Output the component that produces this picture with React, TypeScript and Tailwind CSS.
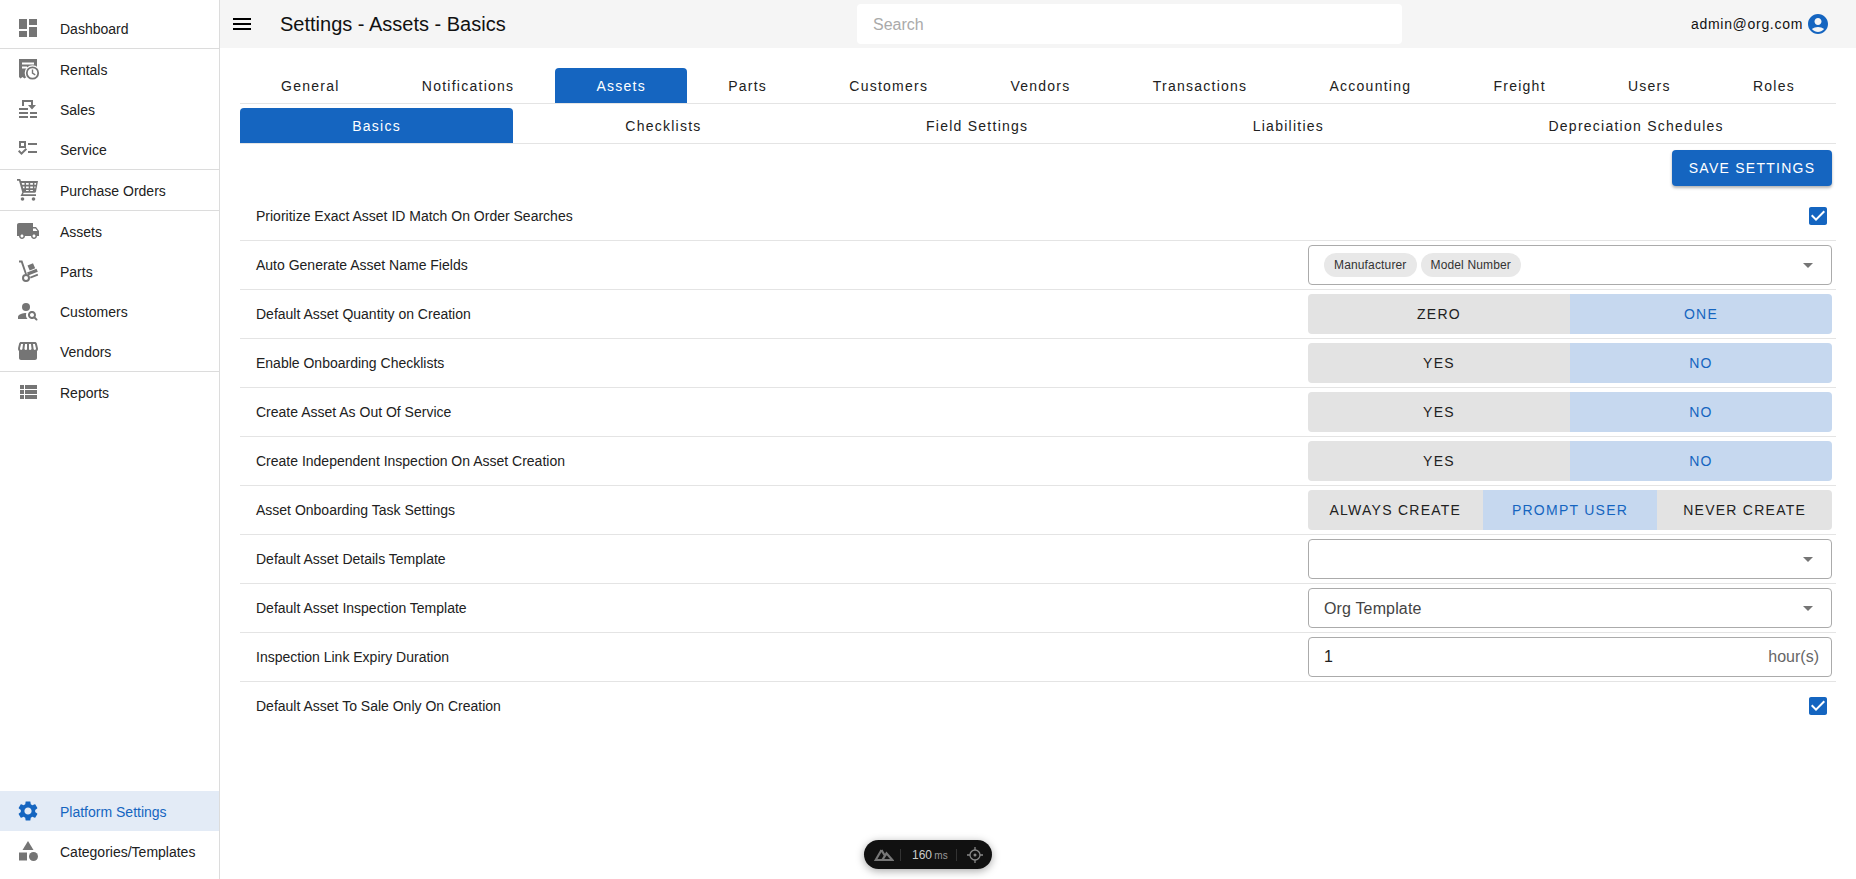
import type { ReactNode } from "react";

const FONT = "font-['Liberation_Sans',Arial,sans-serif]";

function Icon({ d, className = "" }: { d: string; className?: string }) {
  return (
    <svg viewBox="0 0 24 24" className={`h-6 w-6 shrink-0 fill-current ${className}`}>
      <path d={d} />
    </svg>
  );
}

const paths = {
  dashboard: "M3 13h8V3H3v10zm0 8h8v-6H3v6zm10 0h8V11h-8v10zm0-18v6h8V3h-8z",
  truck:
    "M20 8h-3V4H3c-1.1 0-2 .9-2 2v11h2c0 1.66 1.34 3 3 3s3-1.34 3-3h6c0 1.66 1.34 3 3 3s3-1.34 3-3h2v-5l-3-4zM6 18.5c-.83 0-1.5-.67-1.5-1.5s.67-1.5 1.5-1.5 1.5.67 1.5 1.5-.67 1.5-1.5 1.5zm13.5-9l1.96 2.5H17V9.5h2.5zm-1.5 9c-.83 0-1.5-.67-1.5-1.5s.67-1.5 1.5-1.5 1.5.67 1.5 1.5-.67 1.5-1.5 1.5z",
  reports: "M4 14h4v-4H4v4zm0 5h4v-4H4v4zM4 9h4V5H4v4zm5 5h12v-4H9v4zm0 5h12v-4H9v4zM9 5v4h12V5H9z",
  menu: "M3 18h18v-2H3v2zm0-5h18v-2H3v2zm0-7v2h18V6H3z",
  account:
    "M12 2C6.48 2 2 6.48 2 12s4.48 10 10 10 10-4.48 10-10S17.52 2 12 2zm0 4c1.93 0 3.5 1.57 3.5 3.5S13.93 13 12 13s-3.5-1.57-3.5-3.5S10.07 6 12 6zm0 14c-2.03 0-4.43-.82-6.14-2.88C7.55 15.8 9.68 15 12 15s4.45.8 6.14 2.12C16.43 19.18 14.03 20 12 20z",
  settings:
    "M19.14 12.94c.04-.3.06-.61.06-.94 0-.32-.02-.64-.07-.94l2.03-1.58c.18-.14.23-.41.12-.61l-1.92-3.32c-.12-.22-.37-.29-.59-.22l-2.39.96c-.5-.38-1.03-.7-1.62-.94l-.36-2.54c-.04-.24-.24-.41-.48-.41h-3.84c-.24 0-.43.17-.47.41l-.36 2.54c-.59.24-1.13.57-1.62.94l-2.39-.96c-.22-.08-.47 0-.59.22L2.74 8.87c-.12.21-.08.47.12.61l2.03 1.58c-.05.3-.09.63-.09.94s.02.64.07.94l-2.03 1.58c-.18.14-.23.41-.12.61l1.92 3.32c.12.22.37.29.59.22l2.39-.96c.5.38 1.03.7 1.62.94l.36 2.54c.05.24.24.41.48.41h3.84c.24 0 .44-.17.47-.41l.36-2.54c.59-.24 1.13-.56 1.62-.94l2.39.96c.22.08.47 0 .59-.22l1.92-3.32c.12-.22.07-.47-.12-.61l-2.01-1.58zM12 15.6c-1.98 0-3.6-1.62-3.6-3.6s1.62-3.6 3.6-3.6 3.6 1.62 3.6 3.6-1.62 3.6-3.6 3.6z",
  arrow: "M7 10l5 5 5-5z",
  checkbox:
    "M19 3H5c-1.11 0-2 .9-2 2v14c0 1.1.89 2 2 2h14c1.11 0 2-.9 2-2V5c0-1.1-.89-2-2-2zm-9 14l-5-5 1.41-1.41L10 14.17l7.59-7.59L19 8l-9 9z",
};

function RentalsIcon() {
  return (
    <svg viewBox="0 0 24 24" className="h-6 w-6 shrink-0 fill-current">
      <path d="M3 2h18v12H12v7l-1.500-1-2 1.500-2-1.500-2 1.500L3 20z" />
      <path d="M6 5.500h12v2H6zM6 9.500h5v2H6z" fill="#fff" />
      <circle cx="16.500" cy="16" r="7.800" fill="#fff" />
      <circle cx="16.500" cy="16" r="5.700" fill="#fff" stroke="currentColor" strokeWidth="1.800" />
      <path d="M15.800 12.500h1.400v3.300l2.400 1.500-.7 1.100-3.100-1.900z" />
    </svg>
  );
}

function SalesIcon() {
  return (
    <svg viewBox="0 0 24 24" className="h-6 w-6 shrink-0 fill-current">
      <path d="M3 11h9v2H3zM3 15h9v2H3zM14 15h7v2h-7zM3 19h9v2H3zM14 19h7v2h-7z" />
      <path d="M6 9V3h11v5h3l-4 4.500L12 8h3V5H8v4z" />
    </svg>
  );
}

function ServiceIcon() {
  return (
    <svg viewBox="0 0 24 24" className="h-6 w-6 shrink-0 fill-current">
      <path fillRule="evenodd" d="M3 4h7v7H3zm2 2v3h3V6z" />
      <path d="M12 6h9v2h-9zM12 14h9v2h-9zM2 14.500l1.400-1.400 2.100 2.100L9.700 11l1.400 1.400L5.500 18z" />
    </svg>
  );
}

function CartIcon() {
  return (
    <svg viewBox="0 0 24 24" className="h-6 w-6 shrink-0 fill-current">
      <path
        fillRule="evenodd"
        d="M1 1h3.200l.8 2H22l-2 10.500a1.500 1.500 0 0 1-1.500 1.200H7.700l-.7 1.500h13v1.800H4.500l1.800-3.600L3 2.800H1zM5.700 5l.5 1.800h2.300V5zm4.300 0v1.800h2.700V5zm4.200 0v1.800h2.700V5zm4.200 0v1.800h1.500l.3-1.800zM6.700 8.500l.5 1.700h1.300V8.500zm3.300 0v1.700h2.700V8.500zm4.200 0v1.700h2.700V8.500zm4.200 0v1.700h.9l.3-1.700zM10 11.900v1.200h2.700v-1.200zm4.200 0v1.200h2.700v-1.200z"
      />
      <circle cx="6.500" cy="21" r="1.800" />
      <circle cx="17.500" cy="21" r="1.800" />
    </svg>
  );
}

function PartsIcon() {
  return (
    <svg viewBox="0 0 24 24" className="h-6 w-6 shrink-0 fill-current">
      <path d="M3 1.500h3.400L10.900 15l-1.700.6L5 3.500H3z" />
      <path fillRule="evenodd" d="M10 15a4 4 0 1 1 0 8 4 4 0 0 1 0-8zm0 2a2 2 0 1 0 0 4 2 2 0 0 0 0-4z" />
      <path d="M11.500 6.500l5.500-2.300 2.200 5-5.500 2.300zM11 13.500l9.500-3.800 1.300 3-9.600 3.900zM14 17.700l7.500-3 .7 1.800-7.700 3.100z" />
    </svg>
  );
}

function CustomersIcon() {
  return (
    <svg viewBox="0 0 24 24" className="h-6 w-6 shrink-0 fill-current">
      <circle cx="10" cy="8" r="4" />
      <path d="M10.350 14.010C7.620 13.910 2 15.270 2 18v2h9.540c-2.470-2.760-1.230-5.890-1.190-5.990z" />
      <path d="M19.430 18.020c.47-.8.7-1.770.48-2.820-.34-1.640-1.720-2.950-3.380-3.160-2.630-.34-4.850 1.870-4.500 4.500.22 1.660 1.520 3.040 3.160 3.380 1.050.22 2.020-.01 2.820-.48l1.860 1.860c.39.39 1.020.39 1.410 0 .39-.39.39-1.020 0-1.410l-1.850-1.870zM16 18c-1.100 0-2-.9-2-2s.9-2 2-2 2 .9 2 2-.9 2-2 2z" />
    </svg>
  );
}

function VendorsIcon() {
  return (
    <svg viewBox="0 0 24 24" className="h-6 w-6 shrink-0 fill-current">
      <path d="M21.900 8.890l-1.050-4.370c-.22-.9-1-1.520-1.910-1.520H5.050c-.9 0-1.690.63-1.900 1.520L2.100 8.890c-.24 1.020-.02 2.060.62 2.880.08.11.19.19.28.29V19c0 1.100.9 2 2 2h14c1.100 0 2-.9 2-2v-6.940c.09-.09.2-.18.28-.28.64-.82.87-1.870.62-2.890zm-2.990-3.900l1.050 4.370c.1.420.01.840-.25 1.170-.14.180-.44.470-.94.470-.61 0-1.140-.49-1.210-1.140L16.980 5l1.930-.01zM13 5h1.960l.54 4.520c.05.39-.07.78-.33 1.070-.22.26-.54.410-.95.410-.67 0-1.220-.59-1.220-1.310V5zM8.490 9.520L9.040 5H11v4.690c0 .72-.55 1.310-1.290 1.310-.34 0-.65-.15-.89-.41-.25-.29-.37-.68-.33-1.070zm-4.450-.16L5.050 5h1.970l-.58 4.860c-.08.65-.6 1.140-1.210 1.140-.49 0-.8-.29-.93-.47-.27-.32-.36-.75-.26-1.170z" />
    </svg>
  );
}

function CategoryIcon() {
  return (
    <svg viewBox="0 0 24 24" className="h-6 w-6 shrink-0 fill-current">
      <path d="M12 2l-5.500 9h11z" />
      <circle cx="17.500" cy="17.500" r="4.500" />
      <path d="M3 13.500h8v8H3z" />
    </svg>
  );
}

function NavItem({ icon, label, active = false }: { icon: ReactNode; label: string; active?: boolean }) {
  return (
    <div className={`flex h-10 items-center pl-4 ${active ? "bg-[#e3ebf6] text-[#1565c0]" : "text-[#212121]"}`}>
      <span className={active ? "w-11 text-[#1565c0]" : "w-11 text-[#757575]"}>{icon}</span>
      <span className="pt-[2px] text-sm">{label}</span>
    </div>
  );
}

function NavGroup({ children, last = false }: { children: ReactNode; last?: boolean }) {
  return <div className={last ? "" : "border-b border-[#dcdcdc]"}>{children}</div>;
}

function Sidebar() {
  return (
    <aside className="flex h-full w-[220px] shrink-0 flex-col border-r border-[#dcdcdc] bg-white pt-2 pb-2">
      <NavGroup>
        <NavItem icon={<Icon d={paths.dashboard} />} label="Dashboard" />
      </NavGroup>
      <NavGroup>
        <NavItem icon={<RentalsIcon />} label="Rentals" />
        <NavItem icon={<SalesIcon />} label="Sales" />
        <NavItem icon={<ServiceIcon />} label="Service" />
      </NavGroup>
      <NavGroup>
        <NavItem icon={<CartIcon />} label="Purchase Orders" />
      </NavGroup>
      <NavGroup>
        <NavItem icon={<Icon d={paths.truck} />} label="Assets" />
        <NavItem icon={<PartsIcon />} label="Parts" />
        <NavItem icon={<CustomersIcon />} label="Customers" />
        <NavItem icon={<VendorsIcon />} label="Vendors" />
      </NavGroup>
      <NavGroup last>
        <NavItem icon={<Icon d={paths.reports} />} label="Reports" />
      </NavGroup>
      <div className="mt-auto">
        <NavItem active icon={<Icon d={paths.settings} />} label="Platform Settings" />
        <NavItem icon={<CategoryIcon />} label="Categories/Templates" />
      </div>
    </aside>
  );
}

function TopBar() {
  return (
    <header className="relative flex h-12 items-center bg-[#f5f5f5] pr-[26px] pl-[10px]">
      <Icon d={paths.menu} className="text-black" />
      <h1 className="ml-[26px] text-xl text-[#111]">Settings - Assets - Basics</h1>
      <div className="absolute top-1 left-[637px] flex h-10 w-[545px] items-center rounded bg-white pt-px pl-4 text-base text-[#aaa]">
        Search
      </div>
      <div className="ml-auto flex items-center gap-[3px]">
        <span className="text-sm tracking-[0.7px] text-[#111]">admin@org.com</span>
        <Icon d={paths.account} className="text-[#1565c0]" />
      </div>
    </header>
  );
}

function Tabs({ items, active, top = false }: { items: string[]; active: string; top?: boolean }) {
  return (
    <div className={`flex h-9 border-b border-[#e4e4e4] ${top ? "mt-5" : "mt-1"}`}>
      {items.map((t) => (
        <div
          key={t}
          className={`flex flex-auto items-center justify-center rounded-t px-2 text-sm tracking-[1.25px] ${
            t === active ? "bg-[#1565c0] text-white" : "text-[#212121]"
          }`}
        >
          {t}
        </div>
      ))}
    </div>
  );
}

function Toggle({ options, active }: { options: string[]; active: string }) {
  return (
    <div className="flex h-10 overflow-hidden rounded">
      {options.map((o) => (
        <div
          key={o}
          className={`flex flex-1 items-center justify-center text-sm tracking-[1.25px] ${
            o === active ? "bg-[#c6d8ef] text-[#1565c0]" : "bg-[#e3e3e3] text-[#212121]"
          }`}
        >
          {o}
        </div>
      ))}
    </div>
  );
}

function Box({ children, arrow = true }: { children?: ReactNode; arrow?: boolean }) {
  return (
    <div className="flex h-10 items-center rounded border border-[#ababab] pr-[11px] pl-[15px]">
      <div className="flex min-w-0 flex-1 items-center">{children}</div>
      {arrow && <Icon d={paths.arrow} className="text-[#757575]" />}
    </div>
  );
}

function Chip({ label }: { label: string }) {
  return (
    <span className="flex h-6 items-center rounded-full bg-[#e8e8e8] px-[10px] text-xs tracking-[0.15px] text-[#333]">
      {label}
    </span>
  );
}

function Check() {
  return (
    <div className="flex h-10 items-center justify-end pr-[2px]">
      <Icon d={paths.checkbox} className="text-[#1565c0]" />
    </div>
  );
}

function Row({ label, children, last = false }: { label: string; children: ReactNode; last?: boolean }) {
  return (
    <div className={`flex items-center py-1 pl-4 ${last ? "" : "border-b border-[#e4e4e4]"}`}>
      <div className="flex-1 text-sm text-[#212121]">{label}</div>
      <div className="mr-1 w-[524px]">{children}</div>
    </div>
  );
}

function DevPill() {
  return (
    <div className="absolute bottom-[10px] left-[864px] flex h-[29px] w-[128px] items-center rounded-full bg-[#111] pl-[10px] text-[#aaa] shadow-[0_2px_8px_rgba(0,0,0,0.35)]">
      <svg viewBox="0 0 24 16" className="h-[14px] w-[20px] fill-none stroke-[#777] stroke-[2.6]">
        <path d="M9 2L2 14h9M9 2l3.500 6M15 6l-5 8h12z" />
      </svg>
      <span className="ml-[6px] h-3 w-px bg-[#333]" />
      <span className="ml-[11px] text-xs text-[#ccc]">
        160 <span className="ml-[-1px] text-[10px] text-[#999]">ms</span>
      </span>
      <span className="ml-[8px] h-3 w-px bg-[#333]" />
      <svg viewBox="0 0 16 16" className="ml-[10px] h-4 w-4 fill-none stroke-[#888]">
        <circle cx="8" cy="8" r="5" strokeWidth="1.300" />
        <circle cx="8" cy="8" r="1.500" fill="#888" stroke="none" />
        <path d="M8 0v3M8 13v3M0 8h3M13 8h3" strokeWidth="1.300" />
      </svg>
    </div>
  );
}

export default function App() {
  return (
    <div className={`relative flex h-[879px] w-full overflow-hidden bg-white ${FONT}`}>
      <Sidebar />
      <main className="min-w-0 flex-1">
        <TopBar />
        <div className="px-5">
          <Tabs
            top
            active="Assets"
            items={["General", "Notifications", "Assets", "Parts", "Customers", "Vendors", "Transactions", "Accounting", "Freight", "Users", "Roles"]}
          />
          <Tabs active="Basics" items={["Basics", "Checklists", "Field Settings", "Liabilities", "Depreciation Schedules"]} />
          <div className="mt-[6px] mr-1 flex justify-end">
            <button className="h-9 w-[160px] rounded bg-[#1565c0] text-sm tracking-[1.25px] text-white shadow-[0_2px_3px_rgba(0,0,0,0.3)]">
              SAVE SETTINGS
            </button>
          </div>
          <div className="mt-[6px]">
            <Row label="Prioritize Exact Asset ID Match On Order Searches">
              <Check />
            </Row>
            <Row label="Auto Generate Asset Name Fields">
              <Box>
                <div className="flex gap-1">
                  <Chip label="Manufacturer" />
                  <Chip label="Model Number" />
                </div>
              </Box>
            </Row>
            <Row label="Default Asset Quantity on Creation">
              <Toggle options={["ZERO", "ONE"]} active="ONE" />
            </Row>
            <Row label="Enable Onboarding Checklists">
              <Toggle options={["YES", "NO"]} active="NO" />
            </Row>
            <Row label="Create Asset As Out Of Service">
              <Toggle options={["YES", "NO"]} active="NO" />
            </Row>
            <Row label="Create Independent Inspection On Asset Creation">
              <Toggle options={["YES", "NO"]} active="NO" />
            </Row>
            <Row label="Asset Onboarding Task Settings">
              <Toggle options={["ALWAYS CREATE", "PROMPT USER", "NEVER CREATE"]} active="PROMPT USER" />
            </Row>
            <Row label="Default Asset Details Template">
              <Box />
            </Row>
            <Row label="Default Asset Inspection Template">
              <Box>
                <span className="pt-px text-base tracking-[0.15px] text-[#444]">Org Template</span>
              </Box>
            </Row>
            <Row label="Inspection Link Expiry Duration">
              <Box arrow={false}>
                <span className="text-base text-[#212121]">1</span>
                <span className="mr-[1px] ml-auto text-base text-[#666]">hour(s)</span>
              </Box>
            </Row>
            <Row last label="Default Asset To Sale Only On Creation">
              <Check />
            </Row>
          </div>
        </div>
      </main>
      <DevPill />
    </div>
  );
}
